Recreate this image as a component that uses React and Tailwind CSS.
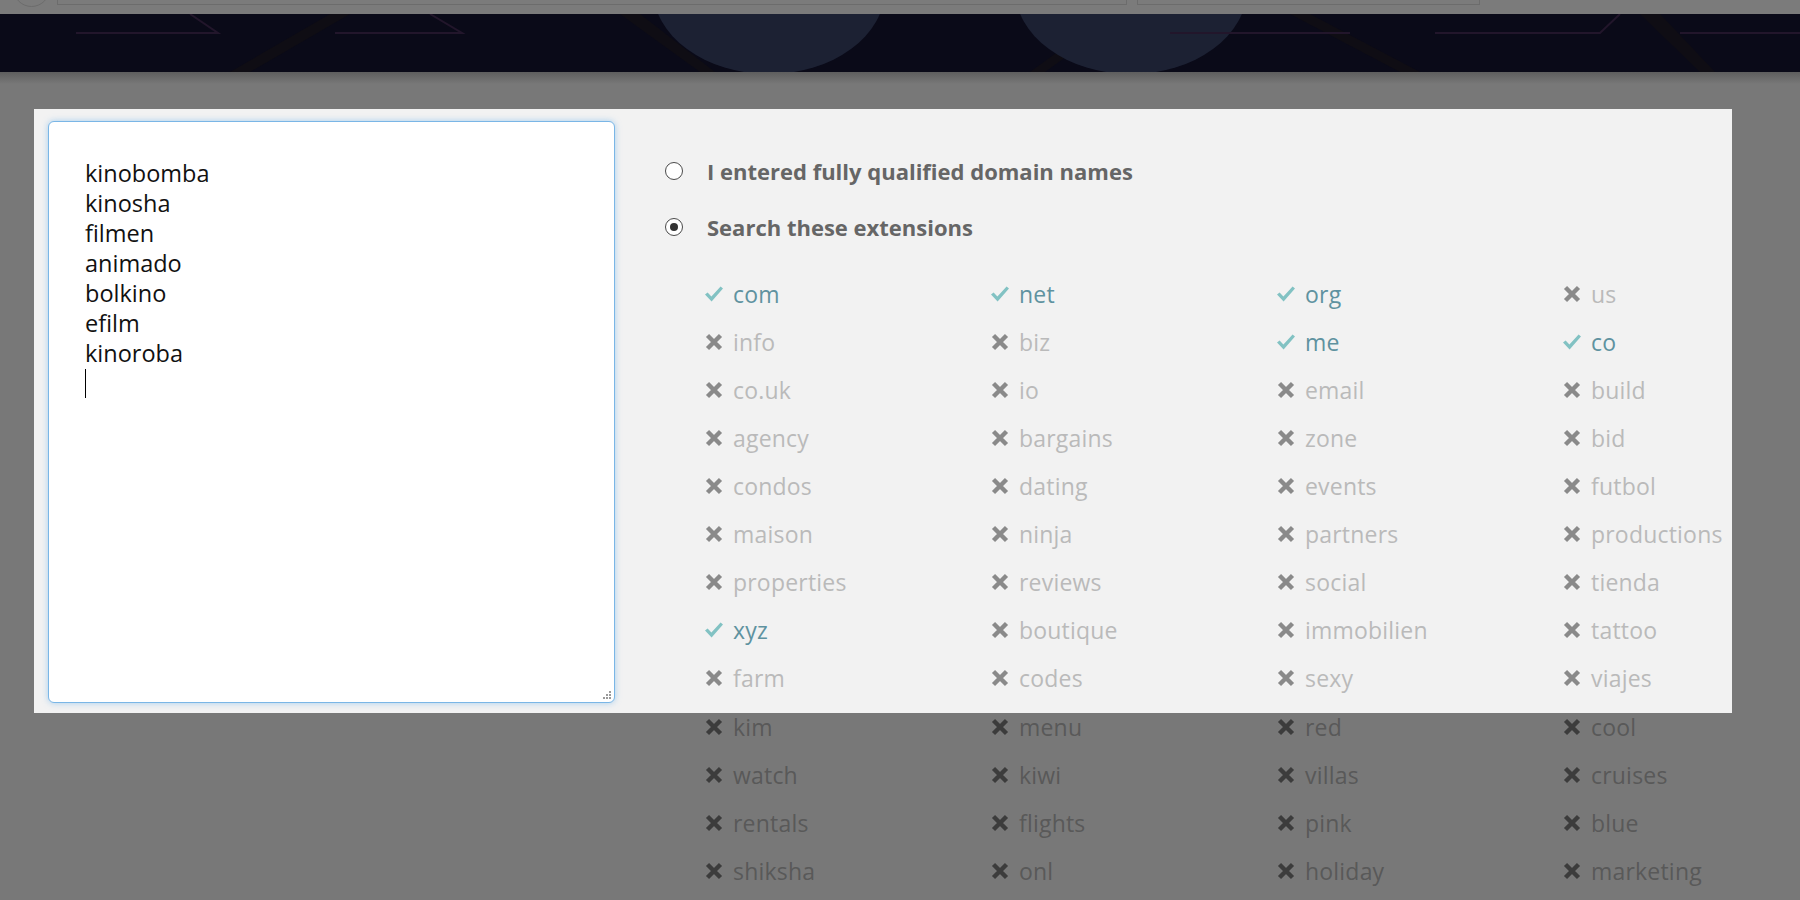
import React from 'react';

const rows = [
  [['com', 1], ['net', 1], ['org', 1], ['us', 0]],
  [['info', 0], ['biz', 0], ['me', 1], ['co', 1]],
  [['co.uk', 0], ['io', 0], ['email', 0], ['build', 0]],
  [['agency', 0], ['bargains', 0], ['zone', 0], ['bid', 0]],
  [['condos', 0], ['dating', 0], ['events', 0], ['futbol', 0]],
  [['maison', 0], ['ninja', 0], ['partners', 0], ['productions', 0]],
  [['properties', 0], ['reviews', 0], ['social', 0], ['tienda', 0]],
  [['xyz', 1], ['boutique', 0], ['immobilien', 0], ['tattoo', 0]],
  [['farm', 0], ['codes', 0], ['sexy', 0], ['viajes', 0]],
  [['kim', 0], ['menu', 0], ['red', 0], ['cool', 0]],
  [['watch', 0], ['kiwi', 0], ['villas', 0], ['cruises', 0]],
  [['rentals', 0], ['flights', 0], ['pink', 0], ['blue', 0]],
  [['shiksha', 0], ['onl', 0], ['holiday', 0], ['marketing', 0]],
];

const names = ['kinobomba', 'kinosha', 'filmen', 'animado', 'bolkino', 'efilm', 'kinoroba'];

const font = { fontFamily: '"Open Sans", "Liberation Sans", sans-serif' };

const CheckIcon = () => (
  <svg width="18" height="17" viewBox="0 0 18 17" className="shrink-0">
    <path d="M0 8.6 L2.6 6.4 L6.4 10.6 L15.6 0.4 L18 2.6 L6.6 15.6 Z" fill="#82c2c3" />
  </svg>
);

const CrossIcon = ({ color }) => (
  <svg width="18" height="18" viewBox="0 0 18 18" className="shrink-0">
    <path d="M2.5 2.5 L15.5 15.5 M15.5 2.5 L2.5 15.5" stroke={color} strokeWidth="4.4" />
  </svg>
);

const ExtItem = ({ name, on, dim }) => (
  <div className="flex items-center gap-[10px] h-[48px]">
    {on ? (
      <CheckIcon />
    ) : (
      <CrossIcon color={dim ? '#3c3c3c' : '#8a8a8a'} />
    )}
    <span
      className={
        'text-[23px] tracking-[0.2px] leading-none ' +
        (on ? 'text-[#5f92a0]' : dim ? 'text-[#595959]' : 'text-[#bababa]')
      }
    >
      {name}
    </span>
  </div>
);

const Radio = ({ checked, label }) => (
  <label className="flex items-center gap-[24px] h-[28px]">
    <span className="w-[18px] h-[18px] rounded-full bg-white border border-[#4a4a4a] flex items-center justify-center">
      {checked && <span className="w-[8px] h-[8px] rounded-full bg-[#333]" />}
    </span>
    <span className="text-[22px] font-bold text-[#666]">{label}</span>
  </label>
);

const Banner = () => (
  <svg width="1800" height="58" viewBox="0 0 1800 58" className="block">
    <rect width="1800" height="58" fill="#0a0a18" />
    <g fill="#0f0d14">
      <path d="M230 58 L330 0 L350 0 L250 58 Z" />
      <path d="M620 0 L700 58 L715 58 L640 0 Z" />
      <path d="M1030 58 L1110 0 L1125 0 L1045 58 Z" />
      <path d="M1290 0 L1400 58 L1420 58 L1310 0 Z" />
      <path d="M1640 0 L1700 58 L1715 58 L1660 0 Z" />
    </g>
    <ellipse cx="769" cy="-25" rx="116" ry="85" fill="#1c2133" />
    <ellipse cx="1131" cy="-25" rx="116" ry="85" fill="#1c2133" />
    <g stroke="#22162b" strokeWidth="2" fill="none">
      <path d="M76 19 L218 19 L190 0" />
      <path d="M335 19 L462 19 L430 0" />
      <path d="M1170 19 L1350 19" />
      <path d="M1435 19 L1600 19 L1620 0" />
      <path d="M1680 19 L1800 19" />
    </g>
  </svg>
);

export default function App() {
  const inside = rows.slice(0, 9);
  const outside = rows.slice(9);
  return (
    <div className="w-[1800px] h-[900px] overflow-hidden bg-[#787878]" style={font}>
      {/* top strip */}
      <div className="h-[14px] bg-[#7b7b7b] flex items-start relative overflow-hidden">
        <div className="absolute left-[13px] -top-[30px] w-[37px] h-[37px] rounded-full border border-[#6c6c6c]" />
        <div className="ml-[57px] w-[1070px] h-[5px] border border-t-0 border-[#6c6c6c]" />
        <div className="ml-[10px] w-[343px] h-[5px] border border-t-0 border-[#6c6c6c]" />
      </div>
      <Banner />
      <div className="h-[12px] bg-gradient-to-b from-[#5e5e5e] to-[#787878]" />

      <div className="pt-[25px] pl-[34px]">
        <div className="relative z-10 w-[1698px] h-[604px] bg-[#f2f2f2] flex">
          <div className="pl-[14px] pt-[12px]">
            <div className="relative w-[567px] h-[582px] bg-white border border-[#7ab6e6] rounded-[6px] shadow-[0_0_6px_rgba(102,175,233,0.55)] px-[36px] pt-[36px] text-[23.5px] leading-[30px] text-[#111]">
              {names.map((n) => (
                <div key={n}>{n}</div>
              ))}
              <div className="h-[30px] flex items-center">
                <span className="w-[1px] h-[29px] bg-black" />
              </div>
              <div className="absolute right-[3px] bottom-[3px] grid grid-cols-3 gap-[1px]">
                {[0, 0, 1, 0, 1, 1, 1, 1, 1].map((v, i) => (
                  <span key={i} className={'w-[2px] h-[2px] ' + (v ? 'bg-[#9a9a9a]' : '')} />
                ))}
              </div>
            </div>
          </div>

          <div className="ml-[50px] pt-[48px]">
            <div className="flex flex-col gap-[28px]">
              <Radio label="I entered fully qualified domain names" />
              <Radio checked label="Search these extensions" />
            </div>
            <div className="mt-[29px] ml-[40px] grid grid-cols-[286px_286px_286px_200px]">
              {inside.flat().map(([n, on]) => (
                <ExtItem key={n} name={n} on={!!on} />
              ))}
            </div>
          </div>
        </div>

        <div className="-mt-[10px] ml-[671px] grid grid-cols-[286px_286px_286px_200px]">
          {outside.flat().map(([n, on]) => (
            <ExtItem key={n} name={n} on={!!on} dim />
          ))}
        </div>
      </div>
    </div>
  );
}
